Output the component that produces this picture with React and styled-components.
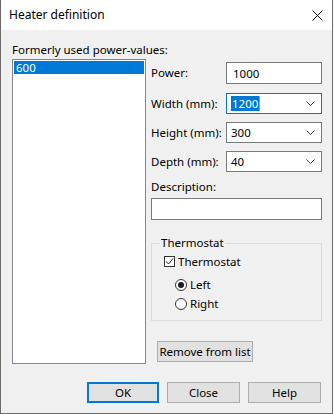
import styled, { createGlobalStyle } from "styled-components"

const Global = createGlobalStyle`
  html, body { margin: 0; padding: 0; background: #ffffff; }
  body { font-family: "Noto Sans", "Open Sans", sans-serif; font-size: 11.5px; color: #000; }
`

const Window = styled.div`
  width: 333px;
  height: 414px;
  box-sizing: border-box;
  border: 1px solid #6a6a6a;
  border-top: none;
  display: flex;
  flex-direction: column;
  background: #f0f0f0;
`

const TitleBar = styled.div`
  height: 30px;
  flex: none;
  background: #ffffff;
  display: flex;
  align-items: center;
  justify-content: space-between;
  padding: 0 9px 0 8px;
  font-size: 12px;
  line-height: 16px;
`

const Body = styled.div`
  flex: 1;
  padding: 12px 10px 0 11px;
  display: flex;
  flex-direction: column;
`

const Main = styled.div`
  display: grid;
  grid-template-columns: 134px 171px;
  column-gap: 5px;
`

const LeftCol = styled.div`
  display: flex;
  flex-direction: column;
`

const Label = styled.div`
  line-height: 16px;
  height: ${p => p.$h || 16}px;
  white-space: nowrap;
`

const ListBox = styled.div`
  height: 305px;
  box-sizing: border-box;
  border: 1px solid #828790;
  background: #fff;
  padding: 1px;
`

const ListItem = styled.div`
  height: 13px;
  line-height: 13px;
  padding-left: 2px;
  background: ${p => (p.$selected ? "#0078d7" : "transparent")};
  color: ${p => (p.$selected ? "#fff" : "#000")};
`

const RightCol = styled.div`
  display: flex;
  flex-direction: column;
  padding-top: 20px;
`

const Row = styled.div`
  display: grid;
  grid-template-columns: 75px 96px;
  align-items: center;
  margin-bottom: ${p => p.$mb || 0}px;
`

const TextBox = styled.div`
  height: ${p => p.$h || 22}px;
  box-sizing: border-box;
  border: 1px solid #7a7a7a;
  background: #fff;
  display: flex;
  align-items: center;
  padding-left: 6px;
`

const Combo = styled.div`
  height: 21px;
  box-sizing: border-box;
  border: 1px solid ${p => (p.$focus ? "#0078d7" : "#7a7a7a")};
  background: #fff;
  display: flex;
  align-items: center;
  justify-content: space-between;
  padding: 0 6px 0 4px;
`

const Selected = styled.span`
  background: #0078d7;
  color: #fff;
  line-height: 15px;
  padding: 0 1px;
  border-right: 1px solid #ff8c1a;
`

const GroupBox = styled.fieldset`
  margin: 16px 0 0;
  padding: 3px 0 0 11px;
  height: 85px;
  box-sizing: border-box;
  border: 1px solid #dcdcdc;
  display: flex;
  flex-direction: column;
`

const Legend = styled.legend`
  padding: 0 1px;
  margin-left: -3px;
  line-height: 14px;
`

const CheckRow = styled.label`
  display: flex;
  align-items: center;
  gap: 3px;
  height: 17px;
  margin-left: ${p => p.$indent || 0}px;
  margin-top: ${p => p.$mt || 0}px;
`

const Box = styled.span`
  width: 11px;
  height: 11px;
  box-sizing: border-box;
  border: 1px solid #333;
  background: #fff;
  display: flex;
  align-items: center;
  justify-content: center;
`

const Radio = styled.span`
  width: 12px;
  height: 12px;
  box-sizing: border-box;
  border: 1px solid #333;
  border-radius: 50%;
  background: #fff;
  display: flex;
  align-items: center;
  justify-content: center;
  &::after {
    content: "";
    width: 6px;
    height: 6px;
    border-radius: 50%;
    background: ${p => (p.$on ? "#1a1a1a" : "transparent")};
  }
`

const Button = styled.div`
  width: ${p => p.$w}px;
  height: 21px;
  box-sizing: border-box;
  border: ${p => (p.$default ? "2px solid #0078d7" : "1px solid #adadad")};
  background: #e1e1e1;
  display: flex;
  align-items: center;
  justify-content: center;
  white-space: nowrap;
`

const RemoveWrap = styled.div`
  margin: 20px 0 0 6px;
`

const Footer = styled.div`
  display: flex;
  justify-content: flex-end;
  gap: 8px;
  margin-top: 18px;
  padding-right: 1px;
`

const Chevron = () => (
  <svg width="9" height="5" viewBox="0 0 9 5">
    <polyline points="0.5,0.5 4.5,4.5 8.5,0.5" fill="none" stroke="#3c3c3c" strokeWidth="1" />
  </svg>
)

const CloseX = () => (
  <svg width="11" height="11" viewBox="0 0 11 11">
    <path d="M0.5 0.5 L10.5 10.5 M10.5 0.5 L0.5 10.5" stroke="#111" strokeWidth="1" />
  </svg>
)

const Check = () => (
  <svg width="9" height="9" viewBox="0 0 9 9">
    <polyline points="1,4.5 3.5,7 8,1.5" fill="none" stroke="#222" strokeWidth="1" />
  </svg>
)

export default function App() {
  return (
    <>
      <Global />
      <Window>
        <TitleBar>
          <span>Heater definition</span>
          <CloseX />
        </TitleBar>
        <Body>
          <Main>
            <LeftCol>
              <Label $h={17}>Formerly used power-values:</Label>
              <ListBox>
                <ListItem $selected>600</ListItem>
              </ListBox>
            </LeftCol>
            <RightCol>
              <Row $mb={9}>
                <Label>Power:</Label>
                <TextBox>1000</TextBox>
              </Row>
              <Row $mb={8}>
                <Label>Width (mm):</Label>
                <Combo $focus>
                  <Selected>1200</Selected>
                  <Chevron />
                </Combo>
              </Row>
              <Row $mb={8}>
                <Label>Height (mm):</Label>
                <Combo>
                  <span>300</span>
                  <Chevron />
                </Combo>
              </Row>
              <Row $mb={7}>
                <Label>Depth (mm):</Label>
                <Combo>
                  <span>40</span>
                  <Chevron />
                </Combo>
              </Row>
              <Label $h={19}>Description:</Label>
              <TextBox />
              <GroupBox>
                <Legend>Thermostat</Legend>
                <CheckRow $indent={1}>
                  <Box><Check /></Box>
                  <span>Thermostat</span>
                </CheckRow>
                <CheckRow $indent={12} $mt={6}>
                  <Radio $on />
                  <span>Left</span>
                </CheckRow>
                <CheckRow $indent={12} $mt={2}>
                  <Radio />
                  <span>Right</span>
                </CheckRow>
              </GroupBox>
              <RemoveWrap>
                <Button $w={96}>Remove from list</Button>
              </RemoveWrap>
            </RightCol>
          </Main>
          <Footer>
            <Button $w={72} $default>OK</Button>
            <Button $w={73}>Close</Button>
            <Button $w={73}>Help</Button>
          </Footer>
        </Body>
      </Window>
    </>
  )
}
